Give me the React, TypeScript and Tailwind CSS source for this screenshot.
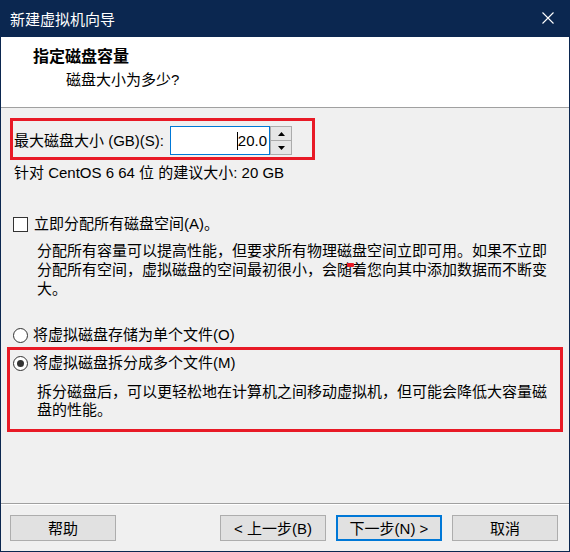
import React from "react";

const RED = "border-[#e81a26]";

function Radio({ checked }: { checked?: boolean }) {
  return (
    <span className="w-[15px] h-[15px] rounded-full border border-[#333333] bg-white flex items-center justify-center shrink-0">
      {checked && <span className="w-[7px] h-[7px] rounded-full bg-[#333333]" />}
    </span>
  );
}

function Btn({ children, primary }: { children: React.ReactNode; primary?: boolean }) {
  return (
    <div
      className={
        "w-[106px] h-[26px] flex items-center justify-center bg-[#e1e1e1] text-[15px] text-black leading-none " +
        (primary ? "border-2 border-[#0078d7]" : "border border-[#adadad]")
      }
    >
      {children}
    </div>
  );
}

export default function App() {
  return (
    <div className="w-[570px] h-[552px] bg-[#0b2750] flex flex-col px-px pb-px font-[family-name:'Liberation_Sans','Noto_Sans_CJK_SC',sans-serif] text-black">
      {/* Title bar */}
      <div className="h-[37px] shrink-0 flex items-center justify-between pl-[9px] pr-[15px] pt-[2px]">
        <span className="text-white text-[15px] leading-[20px]">新建虚拟机向导</span>
        <svg width="12" height="12" viewBox="0 0 12 12" className="mt-[-3px]">
          <path d="M0.5 0.5 L11.5 11.5 M11.5 0.5 L0.5 11.5" stroke="#ffffff" strokeWidth="1.1" />
        </svg>
      </div>

      {/* Body */}
      <div className="flex-1 flex flex-col bg-[#f0f0f0]">
        {/* Header */}
        <div className="h-[71px] shrink-0 bg-white border-b border-[#a0a0a0] pt-[10px]">
          <div className="pl-[32px] text-[16px] font-bold leading-[20px]">指定磁盘容量</div>
          <div className="pl-[65px] text-[15px] leading-[20px] mt-[3px]">磁盘大小为多少?</div>
        </div>

        {/* Content */}
        <div className="flex flex-col">
          <div className={"ml-[9px] mt-[10px] w-[305px] h-[42px] border-[3px] " + RED + " flex items-center pl-px pt-[3px]"}>
            <span className="w-[156px] text-[15px] leading-[20px] whitespace-nowrap">最大磁盘大小 (GB)(S):</span>
            <div className="w-[100px] h-[29px] border border-[#0078d7] bg-white flex items-center justify-end pr-[2px]">
              <span className="w-px h-[18px] bg-black" />
              <span className="text-[15px] leading-[20px]">20.0</span>
            </div>
            <div className="w-[22px] h-[29px] flex flex-col">
              <div className="h-[15px] border border-[#acacac] bg-[#e6e6e6] flex items-center justify-center">
                <svg width="7" height="4" viewBox="0 0 7 4"><path d="M0 4 L3.5 0 L7 4 Z" fill="#000" /></svg>
              </div>
              <div className="h-[14px] border border-t-0 border-[#acacac] bg-[#e6e6e6] flex items-center justify-center">
                <svg width="7" height="4" viewBox="0 0 7 4"><path d="M0 0 L7 0 L3.5 4 Z" fill="#000" /></svg>
              </div>
            </div>
          </div>

          <div className="ml-[13px] mt-[3px] text-[15px] leading-[20px]">针对 CentOS 6 64 位 的建议大小: 20 GB</div>

          <div className="ml-[12px] mt-[31px] h-[20px] flex items-center">
            <span className="w-[15px] h-[15px] border border-[#333333] bg-white shrink-0" />
            <span className="ml-[6px] text-[15px] leading-[20px]">立即分配所有磁盘空间(A)。</span>
          </div>
          <div className="relative ml-[36px] mt-[7px] text-[15px] leading-[19px] whitespace-nowrap">
            <div>分配所有容量可以提高性能，但要求所有物理磁盘空间立即可用。如果不立即</div>
            <div>分配所有空间，虚拟磁盘的空间最初很小，会随着您向其中添加数据而不断变</div>
            <div>大。</div>
            <span className="absolute left-[310px] top-[22px] w-[7px] h-[4px] rounded-[1px] bg-[#e81a26]" />
          </div>

          <div className="ml-[12px] mt-[27px] h-[20px] flex items-center">
            <Radio />
            <span className="ml-[5px] text-[15px] leading-[20px]">将虚拟磁盘存储为单个文件(O)</span>
          </div>

          <div className={"ml-[6px] mt-[2px] w-[556px] border-[3px] " + RED + " pt-[3px] pb-[10px]"}>
            <div className="ml-[3px] h-[20px] flex items-center">
              <Radio checked />
              <span className="ml-[5px] text-[15px] leading-[20px]">将虚拟磁盘拆分成多个文件(M)</span>
            </div>
            <div className="ml-[27px] mt-[10px] text-[15px] leading-[18px] whitespace-nowrap">
              <div>拆分磁盘后，可以更轻松地在计算机之间移动虚拟机，但可能会降低大容量磁</div>
              <div>盘的性能。</div>
            </div>
          </div>
        </div>

        {/* Footer */}
        <div className="mt-auto shrink-0">
          <div className="border-t border-[#a0a0a0] border-b border-b-white" />
          <div className="flex items-center pt-[10px] pb-[10px] pl-[9px] pr-[11px]">
            <Btn>帮助</Btn>
            <div className="flex-1" />
            <Btn>&lt; 上一步(B)</Btn>
            <div className="w-[10px]" />
            <Btn primary>下一步(N) &gt;</Btn>
            <div className="w-[10px]" />
            <Btn>取消</Btn>
          </div>
        </div>
      </div>
    </div>
  );
}
